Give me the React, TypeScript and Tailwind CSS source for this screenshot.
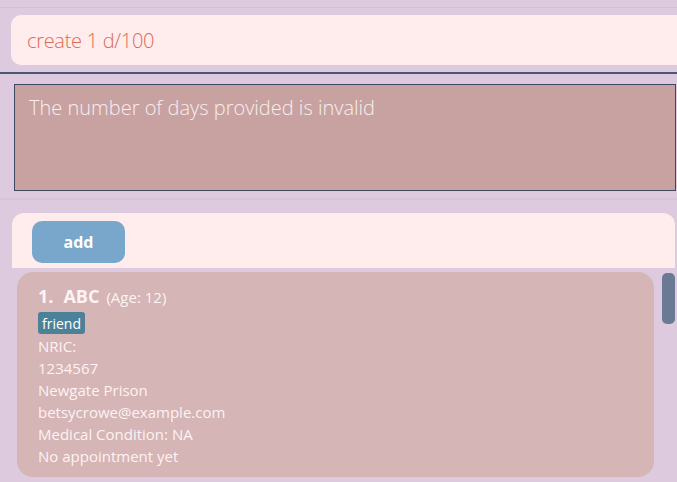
import React from 'react';

const font = { fontFamily: '"Open Sans", "Noto Sans", sans-serif' };

const Card = () => (
  <div className="ml-[17px] mt-[4px] h-[205px] w-[637px] rounded-[16px] bg-[#d5b5b6] pl-[21px] pt-[13px] text-[#fdf3f3]">
    <div className="flex items-baseline">
      <span className="text-[18px] font-bold leading-[22px]">1.</span>
      <span className="ml-[10px] text-[18px] font-bold leading-[22px]">ABC</span>
      <span className="ml-[7px] text-[15px] leading-[22px]">(Age: 12)</span>
    </div>
    <div className="mt-[4px] flex">
      <span className="flex h-[22px] items-center rounded-[3px] bg-[#4b8199] px-[4px] text-[14px] text-white">friend</span>
    </div>
    <div className="pt-[1px] text-[15px] leading-[22px]">
      <div>NRIC:</div>
      <div>1234567</div>
      <div>Newgate Prison</div>
      <div>betsycrowe@example.com</div>
      <div>Medical Condition: NA</div>
      <div>No appointment yet</div>
    </div>
  </div>
);

export default function App() {
  return (
    <div className="flex h-[482px] w-[677px] flex-col overflow-hidden bg-[#ddcade]" style={font}>
      <div className="h-[8px] border-b border-[#d5c0d7]" />
      <div className="pl-[11px] pt-[7px]">
        <div className="flex h-[50px] items-center rounded-l-[10px] bg-[#ffeced] pl-[16px] pt-[2px]">
          <span className="text-[20px] font-light tracking-[-0.3px] text-[#dd6a58]">create 1 d/100</span>
        </div>
      </div>
      <div className="mt-[7px] h-[2px] bg-[#4c586f]" />
      <div className="pl-[14px] pr-[1px] pt-[10px]">
        <div className="h-[107px] border border-[#3d4a60] bg-[#c8a2a1] pl-[14px] pt-[8px]">
          <span className="text-[20px] font-light text-[#f7eeee]">The number of days provided is invalid</span>
        </div>
      </div>
      <div className="mt-[7px] h-[2px] bg-[#d8c3d9]" />
      <div className="pl-[12px] pr-[2px] pt-[13px]">
        <div className="flex h-[55px] items-start rounded-t-[12px] bg-[#ffeced] pl-[20px] pt-[8px]">
          <button className="flex h-[42px] w-[93px] items-center justify-center rounded-[10px] bg-[#79a7cc] text-[16px] font-bold text-white">
            add
          </button>
        </div>
      </div>
      <div className="flex">
        <Card />
        <div className="ml-[8px] mt-[5px] h-[51px] w-[13px] rounded-[5px] bg-[#6a7a94]" />
      </div>
    </div>
  );
}
